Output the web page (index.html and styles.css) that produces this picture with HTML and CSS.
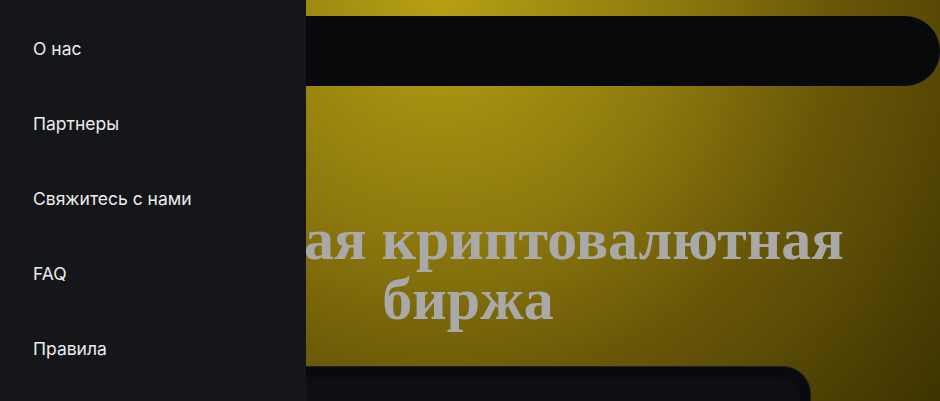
FILE: index.html
```html
<!DOCTYPE html>
<html lang="ru">
<head>
<meta charset="utf-8">
<title>Биржа</title>
<link rel="stylesheet" href="styles.css">
</head>
<body>
<div class="page">
  <header class="topbar"></header>
  <main class="hero">
    <h1 class="hero-title">Надежная криптовалютная биржа</h1>
    <div class="card">
      <div class="card-inner"></div>
    </div>
  </main>
</div>
<nav class="drawer">
  <a class="drawer-link" href="#">О нас</a>
  <a class="drawer-link" href="#">Партнеры</a>
  <a class="drawer-link" href="#">Свяжитесь с нами</a>
  <a class="drawer-link" href="#">FAQ</a>
  <a class="drawer-link" href="#">Правила</a>
</nav>
</body>
</html>
```
FILE: styles.css
```css
html, body {
  margin: 0;
  padding: 0;
  height: 100%;
  overflow: hidden;
}
body {
  background: radial-gradient(circle at 440px 0, #b5a014 0, #8c780d 240px, #6a5808 390px, #574805 500px, #3a2f00 660px);
  font-family: "Liberation Serif", serif;
}
.page {
  display: flex;
  flex-direction: column;
  padding-top: 16px;
}
.topbar {
  height: 70px;
  margin-left: 120px;
  background: #08090b;
  border-radius: 35px;
}
.hero {
  display: flex;
  flex-direction: column;
  align-items: center;
  padding-right: 4px;
}
.hero-title {
  margin: 123px 0 0;
  width: 780px;
  text-align: center;
  font-family: "Liberation Serif", "Times New Roman", serif;
  font-weight: bold;
  font-size: 60px;
  line-height: 60px;
  color: #a9a9a9;
}
.card {
  margin-top: 37px;
  width: 686px;
  height: 40px;
  box-sizing: border-box;
  padding: 10px 10px 0;
  background: #090a0d;
  border: 1px solid #1b212b;
  border-bottom: 0;
  border-radius: 28px 28px 0 0;
}
.card-inner {
  height: 100%;
  background: #0e0f12;
  border-radius: 20px 20px 0 0;
}
.drawer {
  position: fixed;
  top: 0;
  left: 0;
  bottom: 0;
  width: 306px;
  background: #15161a;
  display: flex;
  flex-direction: column;
  padding-top: 11px;
  box-sizing: border-box;
}
.drawer-link {
  display: block;
  padding: 28px 33px;
  line-height: 19px;
  font-family: Inter, "Noto Sans", sans-serif;
  font-size: 17.5px;
  color: #ececee;
  text-decoration: none;
}
```
